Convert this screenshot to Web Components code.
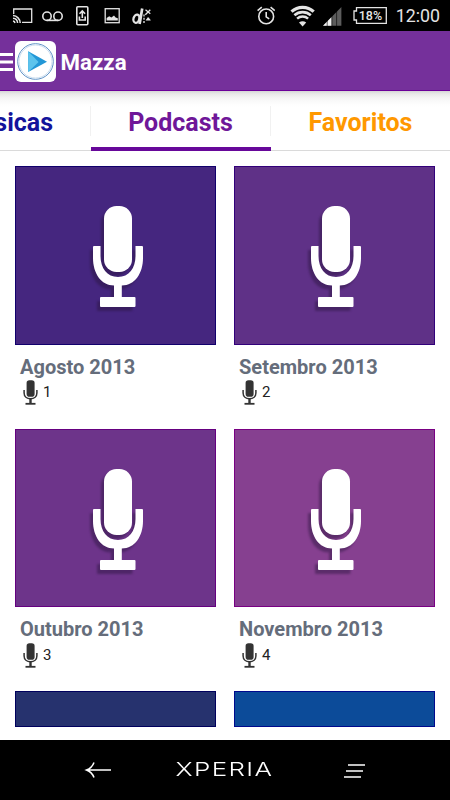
<!DOCTYPE html>
<html lang="pt">
<head>
<meta charset="utf-8">
<meta name="viewport" content="width=device-width, initial-scale=1">
<title>Mazza</title>
<style>
  body {
    margin: 0;
    background: #fff;
    font-family: Roboto, "Liberation Sans", sans-serif;
  }
</style>
</head>
<body>
<podcast-app>
  <status-bar slot="status" battery="18%" time="12:00"></status-bar>
  <app-header slot="header">Mazza</app-header>
  <tab-strip slot="tabs">
    <tab-item color="#13139b" cut>Músicas</tab-item>
    <tab-item color="#6f1799" active>Podcasts</tab-item>
    <tab-item color="#ff9800">Favoritos</tab-item>
  </tab-strip>
  <podcast-card color="#45267f" edge="#11006c" count="1">Agosto 2013</podcast-card>
  <podcast-card color="#5f3187" edge="#32007a" count="2">Setembro 2013</podcast-card>
  <podcast-card color="#6d348a" edge="#650080" count="3">Outubro 2013</podcast-card>
  <podcast-card color="#864090" edge="#790083" count="4">Novembro 2013</podcast-card>
  <podcast-card color="#26326e" edge="#00005d" peek></podcast-card>
  <podcast-card color="#0c4b99" edge="#00098d" peek></podcast-card>
  <nav-bar slot="nav">XPERIA</nav-bar>
</podcast-app>

<script>
(function() {
  class PodcastApp extends HTMLElement {
    constructor() {
      super();
      this.attachShadow({ mode: 'open' });
      this.shadowRoot.innerHTML = `
        <style>
          :host {
            display: flex;
            flex-direction: column;
            width: 450px;
            height: 800px;
            overflow: hidden;
          }

          main {
            flex: 1;
            min-height: 0;
            padding: 15px 15px 13px;
            box-sizing: border-box;
          }

          .grid {
            display: grid;
            grid-template-columns: 201px 201px;
            grid-auto-rows: 262.5px;
            column-gap: 18px;
            height: 100%;
            overflow: hidden;
          }
        </style>
        <slot name="status"></slot>
        <slot name="header"></slot>
        <slot name="tabs"></slot>
        <main><div class="grid"><slot></slot></div></main>
        <slot name="nav"></slot>
      `;
    }
  }

  class StatusBar extends HTMLElement {
    constructor() {
      super();
      this.attachShadow({ mode: 'open' });
      this.shadowRoot.innerHTML = `
        <style>
          :host {
            display: flex;
            flex: none;
            justify-content: space-between;
            height: 31px;
            padding: 0 10px 0 12px;
            background: #000;
            color: #e4e4e4;
          }

          svg { display: block; flex: none; }
          .left, .right { display: flex; align-items: center; }
          .left { gap: 9px; }
          .battery {
            display: grid;
            margin-left: 10px;
          }
          .battery > * { grid-area: 1 / 1; }
          .battery span {
            align-self: center;
            padding-left: 7px;
            font-size: 12.5px;
            font-weight: 500;
            line-height: 17px;
          }
          .time {
            margin-left: 9px;
            font-size: 17.8px;
            line-height: 32px;
          }
        </style>
        <div class="left">
          <svg width="21" height="31" fill="none" stroke="currentColor" stroke-width="1.3">
            <path d="M1.7 14V9h18v13.4H10"/>
            <path d="M1 15.6a7.6 7.6 0 0 1 7.2 7.4M1 18.2a5 5 0 0 1 4.6 4.8M1 21a2.5 2.5 0 0 1 2 2" stroke-width="1.5"/>
          </svg>
          <svg width="21" height="31" fill="none" stroke="currentColor" stroke-width="1.6">
            <circle cx="5" cy="16.2" r="4.2"/><circle cx="16" cy="16.2" r="4.2"/>
            <path d="M5 20.4h11"/>
          </svg>
          <svg width="20" height="31" fill="none" stroke="currentColor">
            <rect x="4.8" y="6.8" width="11" height="18" rx="1" stroke-width="1.6"/>
            <path d="M7.4 16.5V20h5.8v-3.5M10.3 18v-6M7.5 13.8l2.8-2.8 2.8 2.8" stroke-width="1.6"/>
          </svg>
          <svg width="20" height="31">
            <rect x="4.2" y="8.7" width="14" height="14" fill="none" stroke="currentColor" stroke-width="1.3"/>
            <path d="M5.6 20.6V18l2.6-1.8 2.2 1.2 2.6-2 1.6 2 2.2.8v2.4z" fill="currentColor"/>
          </svg>
          <svg width="22" height="31" fill="none" stroke="currentColor">
            <ellipse cx="6.4" cy="18.700" rx="2.900" ry="4.200" stroke-width="2.300" transform="rotate(16 6.400 18.700)"/>
            <path d="M12.200 8.500 9.600 24" stroke-width="2.700"/>
            <path d="m15.500 9.800 4.800 4M20.300 9.800l-5 5" stroke-width="1.3"/>
            <path d="M14 14.500v8.500" stroke-width="1.3" stroke-dasharray="2 1.2"/>
            <path d="M15.700 20.600c.2-1.800 1.500-1.600 1.700-3.200H19c.2 1.600 1.600 1.400 1.800 3.200z" fill="currentColor" stroke="none"/>
          </svg>
        </div>
        <div class="right">
          <svg width="20" height="31" fill="none" stroke="currentColor" stroke-width="1.6">
            <circle cx="11.2" cy="16.4" r="7.400"/>
            <path d="M11.200 12v4.800l3 2M2.600 10.600l4.200-3.400M19.800 10.600l-4.200-3.400"/>
          </svg>
          <svg width="26" height="31" style="margin-left:15px" fill="none" stroke="currentColor">
            <path d="M1.500 11.600a16.500 16.500 0 0 1 22.200 0" stroke-width="3.2"/>
            <path d="M4.400 15.200a12.500 12.500 0 0 1 16.400 0" stroke-width="2.6"/>
            <path d="M7.100 18.600a8.300 8.300 0 0 1 11 0" stroke-width="2.5"/>
            <path d="M12.600 26.400 9 22.400q3.600-2.400 7.200 0z" fill="currentColor" stroke="none"/>
          </svg>
          <svg width="20" height="31" style="margin-left:6px">
            <path d="M1 25.800 19.400 7v18.800z" fill="#5c5c5c"/>
            <path d="M1 25.800 9.600 17v8.800z" fill="#f2f2f2"/>
            <path d="M5.200 7v19M9.900 7v19M14.600 7v19" stroke="#000" stroke-width=".6"/>
          </svg>
          <div class="battery">
            <svg width="35" height="31" fill="none" stroke="currentColor" stroke-width="1.3">
              <path d="M4.500 11V7.700h29.800v15.600H4.500V20H2v-9z"/>
            </svg>
            <span id="level"></span>
          </div>
          <div class="time" id="time"></div>
        </div>
      `;
    }

    connectedCallback() {
      this.shadowRoot.getElementById('level').textContent = this.getAttribute('battery');
      this.shadowRoot.getElementById('time').textContent = this.getAttribute('time');
    }
  }

  class AppHeader extends HTMLElement {
    constructor() {
      super();
      this.attachShadow({ mode: 'open' });
      this.shadowRoot.innerHTML = `
        <style>
          :host {
            display: flex;
            flex: none;
            align-items: center;
            height: 60px;
            box-sizing: border-box;
            border-bottom: 1px solid #6b0099;
            background: #75309b;
            color: #fff;
            font-size: 22.3px;
            font-weight: 700;
          }

          .menu { width: 13px; height: 59px; flex: none; }
          .logo { width: 41px; height: 41px; margin: 1px 4.5px 0 2px; flex: none; }
          .title { padding-top: 2px; }
        </style>
        <svg class="menu" fill="#fff">
          <path d="M0 22h13v3H0zM0 29.5h13v3H0zM0 37h13v3H0z"/>
        </svg>
        <svg class="logo" viewBox="0 0 41 41">
          <rect width="41" height="41" rx="6" fill="#fff"/>
          <circle cx="20.5" cy="20.5" r="17.8" fill="none" stroke="#5d91c6" stroke-width="1"/>
          <circle cx="20.5" cy="20.5" r="16.5" fill="none" stroke="#cddff0" stroke-width="1"/>
          <path d="M13.2 10.3 32 20.7 13.2 31z" fill="#2297d6"/>
          <path d="M13.2 10.3 23.6 21 13.2 31z" fill="#5cc3ec"/>
        </svg>
        <span class="title"><slot></slot></span>
      `;
    }
  }

  class TabStrip extends HTMLElement {
    constructor() {
      super();
      this.attachShadow({ mode: 'open' });
      this.shadowRoot.innerHTML = `
        <style>
          :host {
            display: grid;
            flex: none;
            grid-template-columns: 91px 180px 179px;
            height: 60px;
            overflow: hidden;
            background: linear-gradient(#d6d6d6 0, #e9e9e9 3px, #f5f5f5 7px, #fdfdfd 13px, #fff 17px);
          }
        </style>
        <slot></slot>
      `;
    }
  }

  class TabItem extends HTMLElement {
    constructor() {
      super();
      this.attachShadow({ mode: 'open' });
      this.shadowRoot.innerHTML = `
        <style>
          :host {
            display: flex;
            justify-content: center;
            box-sizing: border-box;
            min-width: 0;
            height: 60px;
            padding-top: 15px;
            border-bottom: 1px solid #dadada;
            background: linear-gradient(#f1f1f1, #f1f1f1) right 15px / 1px 30px no-repeat;
            font-size: 25px;
            font-weight: 700;
            line-height: 33px;
            white-space: nowrap;
          }

          :host([active]) { border-bottom: 4px solid #67089a; padding-right: 1px; }
          :host([cut]) { justify-content: flex-end; padding-right: 38px; overflow: hidden; }
          :host(:last-child) { background: none; }
        </style>
        <span><slot></slot></span>
      `;
    }

    connectedCallback() {
      this.style.color = this.getAttribute('color');
    }
  }

  class MicIcon extends HTMLElement {
    constructor() {
      super();
      this.attachShadow({ mode: 'open' });
      this.shadowRoot.innerHTML = `
        <style>
          :host { display: block; width: 50px; height: 101px; }
          :host([small]) { width: 15px; height: 25px; }
          svg { display: block; width: 100%; height: 100%; overflow: visible; }
          .small, :host([small]) .large { display: none; }
          :host([small]) .small { display: block; }
        </style>
        <svg class="large" viewBox="0 0 50 101" fill="currentColor">
          <rect x="11" y="0" width="28" height="66" rx="12.5"/>
          <path d="M1 40h6.5v10C7.5 62 14 71 25 71s17.500-9 17.500-21V40H49q1 0 1 1v11c0 15-8 27.500-21.200 27.500V91H41.500q1 0 1 1v8q0 1-1 1H8q-1 0-1-1v-8q0-1 1-1h13V79.500C8 79.500 0 67 0 52V41q0-1 1-1z"/>
        </svg>
        <svg class="small" viewBox="0 0 15 25" fill="none" stroke="currentColor">
          <rect x="3.6" y=".3" width="8" height="16.4" rx="2.8" fill="currentColor" stroke="none"/>
          <path d="M1.100 10v3c0 3.600 2.800 5.800 6.400 5.800s6.400-2.200 6.400-5.800v-3" stroke-width="1.500"/>
          <path d="M7.500 19v4" stroke-width="2.400"/>
          <path d="M2.500 23.800h10" stroke-width="1.800"/>
        </svg>
      `;
    }
  }

  class PodcastCard extends HTMLElement {
    constructor() {
      super();
      this.attachShadow({ mode: 'open' });
      this.shadowRoot.innerHTML = `
        <style>
          :host { display: block; }

          .cover {
            display: flex;
            justify-content: center;
            box-sizing: border-box;
            height: 178.5px;
            padding: 39px 0 0 4px;
            border: 1px solid var(--edge);
            background: var(--cover);
            color: #fff;
          }

          .cover mic-icon { filter: drop-shadow(-3px 4px 1px rgba(40, 20, 60, .45)); }
          :host(:nth-of-type(even)) .cover { padding-left: 3px; }
          .title {
            height: 26.5px;
            padding: 9px 0 0 5px;
            color: #656d7b;
            font-size: 20.05px;
            font-weight: 700;
            line-height: 26px;
            white-space: nowrap;
          }
          .meta {
            display: flex;
            align-items: center;
            gap: 5px;
            padding: 0 0 0 8px;
            color: #222;
            font-size: 15px;
            line-height: 25px;
          }
          .meta mic-icon { color: #333; }

          /* only the cover's top strip shows */
          :host([peek]) .cover { height: 36px; padding: 0; }
          :host([peek]) .cover mic-icon, :host([peek]) .title, :host([peek]) .meta { display: none; }
        </style>
        <div class="cover"><mic-icon></mic-icon></div>
        <div class="title"><slot></slot></div>
        <div class="meta"><mic-icon small></mic-icon><span id="count"></span></div>
      `;
    }

    connectedCallback() {
      this.style.setProperty('--cover', this.getAttribute('color'));
      this.style.setProperty('--edge', this.getAttribute('edge'));
      this.shadowRoot.getElementById('count').textContent = this.getAttribute('count');
    }
  }

  class NavBar extends HTMLElement {
    constructor() {
      super();
      this.attachShadow({ mode: 'open' });
      this.shadowRoot.innerHTML = `
        <style>
          :host {
            display: grid;
            flex: none;
            grid-template-columns: 161px 126px 163px;
            align-items: center;
            height: 60px;
            background: #000;
            color: #fff;
          }

          svg { display: block; }
          .brand {
            justify-self: center;
            transform: scaleX(1.38);
            font-family: Inter, sans-serif;
            font-size: 18.8px;
            font-weight: 300;
            letter-spacing: 1px;
            line-height: 58px;
          }
        </style>
        <svg width="161" height="60" fill="none" stroke="#fff" stroke-width="1.5">
          <path d="M86 30h25M94 22.5q-2 5.5-7.500 7.500 5.500 2 7.500 7.500"/>
        </svg>
        <span class="brand"><slot></slot></span>
        <svg width="163" height="60" fill="none" stroke="#fff" stroke-width="1.5">
          <path d="M61 25h17M59 31h17M57 37h17"/>
        </svg>
      `;
    }
  }

  customElements.define('mic-icon', MicIcon);
  customElements.define('podcast-card', PodcastCard);
  customElements.define('podcast-app', PodcastApp);
  customElements.define('status-bar', StatusBar);
  customElements.define('app-header', AppHeader);
  customElements.define('tab-item', TabItem);
  customElements.define('tab-strip', TabStrip);
  customElements.define('nav-bar', NavBar);
})();
</script>
</body>
</html>
